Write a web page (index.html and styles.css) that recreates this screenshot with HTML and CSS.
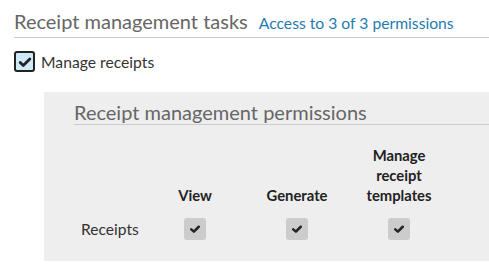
FILE: index.html
```html
<!DOCTYPE html>
<html lang="en">
<head>
    <meta charset="UTF-8">
    <meta name="viewport" content="width=device-width, initial-scale=1.0">
    <title>Receipt management tasks</title>
    <link rel="stylesheet" href="styles.css">
</head>
<body>
    <div class="task-header">
        <h1>Receipt management tasks</h1>
        <a href="#" class="access">Access to 3 of 3 permissions</a>
    </div>

    <label class="task-check">
        <span class="box">
            <svg viewBox="0 0 16 16" width="14" height="14"><path d="M2.5 8.5 L6 12 L13.5 4.5" fill="none" stroke="#222" stroke-width="3.2" stroke-linecap="round" stroke-linejoin="round"/></svg>
        </span>
        Manage receipts
    </label>

    <div class="panel">
        <h2>Receipt management permissions</h2>
        <table class="perms">
            <tr>
                <th class="label-col"></th>
                <th>View</th>
                <th>Generate</th>
                <th>Manage<br>receipt<br>templates</th>
            </tr>
            <tr>
                <td class="label-col">Receipts</td>
                <td><span class="perm-box"><svg viewBox="0 0 16 16" width="12" height="12"><path d="M3 8.5 L6.5 11.5 L13 5" fill="none" stroke="#222" stroke-width="3.4" stroke-linecap="round" stroke-linejoin="round"/></svg></span></td>
                <td><span class="perm-box"><svg viewBox="0 0 16 16" width="12" height="12"><path d="M3 8.5 L6.5 11.5 L13 5" fill="none" stroke="#222" stroke-width="3.4" stroke-linecap="round" stroke-linejoin="round"/></svg></span></td>
                <td><span class="perm-box"><svg viewBox="0 0 16 16" width="12" height="12"><path d="M3 8.5 L6.5 11.5 L13 5" fill="none" stroke="#222" stroke-width="3.4" stroke-linecap="round" stroke-linejoin="round"/></svg></span></td>
            </tr>
        </table>
    </div>
</body>
</html>
```

FILE: styles.css
```css
body { margin: 0; padding: 9px 0 0 14px; font-family: Lato, "Open Sans", sans-serif; color: #333; background: #fff; }

.task-header { display: flex; align-items: baseline; gap: 11px; border-bottom: 1px solid #ccc; padding-bottom: 3px; }
.task-header h1 { margin: 0; font-size: 20px; font-weight: normal; color: #666; line-height: 25px; }
.access { color: #1f7bb0; text-decoration: none; font-size: 15.7px; }

.task-check { display: flex; align-items: center; gap: 6px; margin-top: 13px; font-size: 15.7px; color: #333; }
.box { width: 17px; height: 17px; border: 2px solid #222; border-radius: 3px; background: #cfe8fa; display: flex; align-items: center; justify-content: center; }

.panel { margin: 20px 0 0 30px; background: #eee; padding: 8px 0 10px 30px; height: 151px; }
.panel h2 { margin: 0; font-size: 20px; font-weight: normal; color: #666; line-height: 24px; border-bottom: 1px solid #ccc; }

.perms { border-collapse: collapse; margin-top: 20px; table-layout: fixed; }
.perms th { font-size: 14.8px; font-weight: bold; color: #222; line-height: 20px; vertical-align: bottom; width: 102px; padding: 0; text-align: center; }
.perms td { font-size: 15.6px; text-align: center; padding: 13px 0 0; }
.perms .label-col { width: 63px; text-align: left; padding-left: 7px; }
.perm-box { display: inline-flex; width: 22px; height: 22px; border-radius: 3px; background: #ccc; align-items: center; justify-content: center; vertical-align: middle; }
```
